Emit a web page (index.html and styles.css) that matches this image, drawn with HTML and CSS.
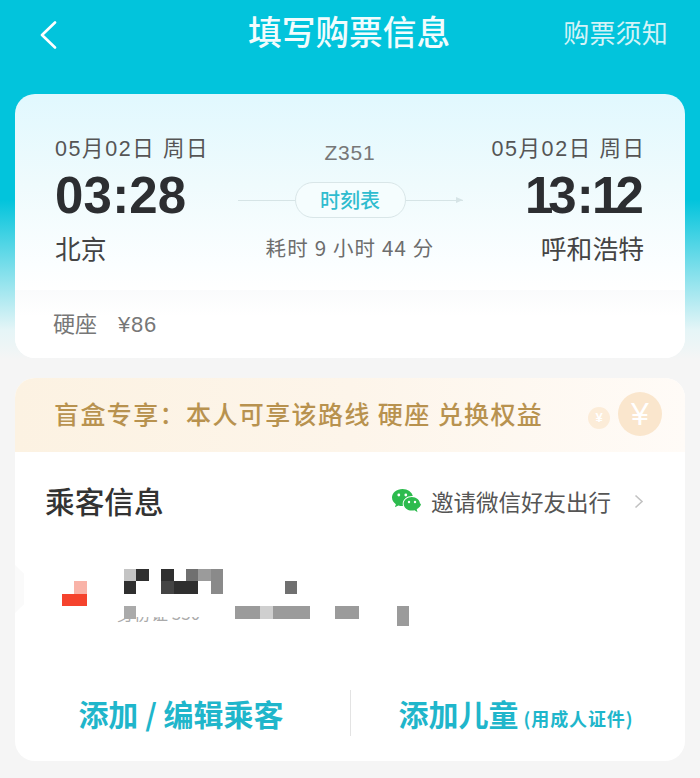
FILE: index.html
```html
<!DOCTYPE html>
<html lang="zh">
<head>
<meta charset="utf-8">
<title>填写购票信息</title>
<link rel="stylesheet" href="styles.css">
</head>
<body>
<div class="page">
  <header class="nav">
    <svg class="back" viewBox="0 0 18 28" width="18" height="28"><path d="M16 1.500 3 14l13 12.500" fill="none" stroke="#fff" stroke-width="2.600" stroke-linecap="round" stroke-linejoin="round"/></svg>
    <h1 class="nav-title">填写购票信息</h1>
    <span class="nav-link">购票须知</span>
  </header>

  <section class="card ticket">
    <div class="route">
      <div class="stop">
        <div class="date">05月02日 周日</div>
        <div class="time">03:28</div>
        <div class="city">北京</div>
      </div>
      <div class="middle">
        <div class="train">Z351</div>
        <div class="schedule">
          <span class="line"></span>
          <span class="pill">时刻表</span>
          <span class="line line-arrow"></span>
        </div>
        <div class="duration">耗时 9 小时 44 分</div>
      </div>
      <div class="stop stop-end">
        <div class="date date-end">05月02日 周日</div>
        <div class="time"><span class="one">1</span>3:<span class="one">1</span>2</div>
        <div class="city">呼和浩特</div>
      </div>
    </div>
    <div class="seat">硬座<span class="price">¥86</span></div>
  </section>

  <section class="card passenger">
    <div class="banner">
      <span class="banner-text">盲盒专享：本人可享该路线 硬座 兑换权益</span>
      <span class="coin coin-small">¥</span>
      <span class="coin coin-big">¥</span>
    </div>
    <div class="pass-head">
      <h2 class="pass-title">乘客信息</h2>
      <div class="invite">
        <svg class="wechat" viewBox="0 0 30 27" width="30" height="27">
          <path d="M11.500 1C5.600 1 1 4.900 1 9.600c0 2.700 1.500 5 3.900 6.600l-1 3 3.500-1.800c1.200.4 2.500.6 3.800.6h.8a8 8 0 0 1-.3-2c0-4.400 4.200-7.900 9.400-7.900h.7C21.100 4.200 16.700 1 11.500 1z" fill="#2dbb4e"/>
          <path d="M29 15.800c0-3.800-3.700-6.800-8.200-6.800s-8.200 3-8.200 6.800 3.700 6.800 8.200 6.800c1 0 1.900-.1 2.800-.4l2.900 2.100-.8-3c2.500-1.300 4.300-3.700 4.300-5.500z" fill="#2dbb4e"/>
          <circle cx="7.800" cy="7" r="1.400" fill="#fff"/><circle cx="14.800" cy="7" r="1.400" fill="#fff"/>
          <circle cx="18" cy="14" r="1.200" fill="#fff"/><circle cx="24" cy="14" r="1.200" fill="#fff"/>
        </svg>
        <span class="invite-text">邀请微信好友出行</span>
        <svg class="chev" viewBox="0 0 10 15" width="10" height="15"><path d="M1.500 1.500 8 7.500l-6.500 6" fill="none" stroke="#c2c2c2" stroke-width="1.600"/></svg>
      </div>
    </div>

    <div class="person">
      <span class="id-scrap">身份证 330 ·· ··· ··</span>
      <div class="mosaic">
        <i class="m2 c5"></i><i class="m9 c6"></i><i class="m9 c8"></i><i class="m6 c10"></i><i class="m4 c11"></i><i class="m5 c12"></i>
        <i class="r1 c1 row1"></i><i class="m9 c5 row1"></i><i class="m8 c8 row1"></i><i class="m9 c9 row1"></i><i class="m9 c10 row1"></i><i class="m5 c12 row1"></i><i class="m6 c18 row1"></i>
        <i class="r2 c0 row2"></i><i class="r2 c1 row2"></i>
        <i class="m3 c5 row3"></i><i class="m4 c14 row3"></i><i class="m4 c15 row3"></i><i class="m1 c16 row3"></i><i class="m4 c17 row3"></i><i class="m4 c18 row3"></i><i class="m4 c19 row3"></i><i class="m4 c22 row3"></i><i class="m4 c23 row3"></i><i class="m4 c27 row3 tall"></i>
      </div>
    </div>

    <div class="actions">
      <button class="action action-left">添加 / 编辑乘客</button>
      <button class="action action-right">添加儿童<small class="action-note">(用成人证件)</small></button>
    </div>
  </section>
</div>
</body>
</html>
```
FILE: styles.css
```css
* { box-sizing: border-box; }
html, body { margin: 0; padding: 0; }
body {
  font-family: "Noto Sans CJK SC", "Liberation Sans", sans-serif;
  background: #f5f5f5;
  color: #333;
}
.page {
  width: 700px;
  height: 778px;
  overflow: hidden;
  padding: 0 15px;
  background: linear-gradient(180deg, #02c4dc 0, #02c4dc 200px, #7fdfeb 270px, #e5f5f7 330px, #f5f5f5 360px, #f5f5f5 100%);
}
.nav {
  height: 94px;
  display: flex;
  align-items: flex-start;
  position: relative;
  padding: 20px 17px 0 24px;
  color: #fff;
}
.back { display: block; margin-top: 1px; }
.nav-title {
  margin: 0;
  position: absolute;
  left: 233px;
  top: 7px;
  font-size: 33.700px;
  line-height: 48px;
  font-weight: 500;
  color: #f2fcfd;
}
.nav-link {
  margin-left: auto;
  margin-top: -3px;
  font-size: 26px;
  line-height: 30px;
  color: #d3f3f7;
  letter-spacing: .2px;
}
.card {
  width: 670px;
  border-radius: 20px;
  background: #fff;
  overflow: hidden;
}
.ticket {
  height: 264px;
  display: flex;
  flex-direction: column;
  background: linear-gradient(180deg, #e1f8fe 0, #effbfd 90px, #fbfeff 170px, #fff 196px);
}
.route {
  height: 196px;
  display: flex;
  justify-content: space-between;
  padding: 40px 41px 0 40px;
}
.stop { width: 160px; display: flex; flex-direction: column; }
.stop-end { align-items: flex-end; }
.date {
  font-size: 21.500px;
  line-height: 30px;
  color: #555;
  letter-spacing: 1.600px;
  white-space: nowrap;
  font-family: "Liberation Sans", "Noto Sans CJK SC", sans-serif;
}
.date-end { margin-right: -1.600px; }
.time {
  font-family: "Liberation Sans", sans-serif;
  font-weight: 700;
  font-size: 51px;
  line-height: 58px;
  margin-top: 3px;
  letter-spacing: .2px;
  color: #2c2e31;
}
.one { letter-spacing: -5px; margin-left: -2px; }
.city {
  margin-top: 5px;
  font-size: 25.800px;
  line-height: 36px;
  color: #444;
}
.middle {
  flex: 1;
  display: flex;
  flex-direction: column;
  align-items: center;
  margin-left: 22px;
  margin-right: 21px;
}
.train {
  margin-top: 5px;
  font-family: "Liberation Sans", sans-serif;
  font-size: 21px;
  line-height: 28px;
  color: #777;
  letter-spacing: .8px;
}
.schedule {
  display: flex;
  align-items: center;
  margin-top: 15px;
  width: 225px;
}
.line { flex: 1; height: 1px; background: #d6e4e6; position: relative; }
.line-arrow::after {
  content: "";
  position: absolute;
  right: 0;
  top: -3px;
  border-left: 7px solid #d6e4e6;
  border-top: 3.500px solid transparent;
  border-bottom: 3.500px solid transparent;
}
.pill {
  width: 111px;
  height: 36px;
  border: 1.500px solid #d9e6e8;
  border-radius: 18px;
  background: #f5fdfe;
  font-size: 20px;
  line-height: 33px;
  font-weight: 500;
  text-align: center;
  color: #2fbccf;
}
.duration {
  margin-top: 14px;
  font-size: 20.500px;
  line-height: 30px;
  color: #6d6d6d;
  white-space: nowrap;
  letter-spacing: 1.150px;
}
.seat {
  flex: 1;
  padding: 17px 0 0 38px;
  font-size: 22px;
  line-height: 30px;
  color: #777;
  background: linear-gradient(180deg, #fafbfc 0, #fff 26px);
}
.price {
  margin-left: 21px;
  font-family: "Liberation Sans", sans-serif;
  letter-spacing: .8px;
}
.passenger {
  margin-top: 20px;
  height: 383px;
  position: relative;
}
.banner {
  height: 74px;
  display: flex;
  align-items: center;
  padding: 0 0 4px 39px;
  background: linear-gradient(90deg, #fcf2e2 0, #fdf5ea 50%, #fffbf7 100%);
  position: relative;
}
.banner-text {
  font-size: 25px;
  font-weight: 500;
  letter-spacing: 1.400px;
  color: #b8924f;
  white-space: nowrap;
}
.coin {
  position: absolute;
  border-radius: 50%;
  background: #fae6cd;
  color: #fff;
  text-align: center;
  font-family: "Liberation Sans", sans-serif;
  font-weight: 700;
}
.coin-small { left: 573px; top: 29px; width: 22px; height: 22px; line-height: 22px; font-size: 13px; background: #fcecd8; }
.coin-big { left: 603px; top: 14px; width: 44px; height: 44px; line-height: 44px; font-size: 32px; font-weight: 400; }
.pass-head {
  height: 100px;
  display: flex;
  align-items: center;
  padding: 0 41px 2px 30px;
  justify-content: space-between;
}
.pass-title {
  margin: 0;
  font-size: 29.700px;
  font-weight: 500;
  line-height: 42px;
  color: #333;
}
.invite { display: flex; align-items: center; }
.wechat { display: block; margin-right: 10px; }
.invite-text {
  font-size: 22.500px;
  line-height: 30px;
  color: #555;
}
.chev { display: block; margin-left: 23px; }
.person {
  height: 139px;
  position: relative;
  padding: 17px 0 0 47px;
}
.person::before {
  content: "";
  position: absolute;
  left: 0;
  top: 13px;
  width: 9px;
  height: 48px;
  background: #fafafa;
  clip-path: polygon(0 0, 100% 18%, 100% 82%, 0 100%);
}
.mosaic {
  position: relative;
  display: grid;
  grid-template-columns: repeat(28, 12.400px);
  grid-template-rows: repeat(4, 12.400px);
  filter: blur(.5px);
}
.mosaic i { display: block; grid-row: 1; }
.row1 { grid-row: 2 !important; }
.row2 { grid-row: 3 !important; }
.row3 { grid-row: 4 !important; }
.tall { height: 20px; }
.c0 { grid-column: 1; } .c1 { grid-column: 2; } .c5 { grid-column: 6; } .c6 { grid-column: 7; }
.c8 { grid-column: 9; } .c9 { grid-column: 10; } .c10 { grid-column: 11; } .c11 { grid-column: 12; }
.c12 { grid-column: 13; } .c14 { grid-column: 15; } .c15 { grid-column: 16; } .c16 { grid-column: 17; }
.c17 { grid-column: 18; } .c18 { grid-column: 19; } .c19 { grid-column: 20; } .c22 { grid-column: 23; }
.c23 { grid-column: 24; } .c27 { grid-column: 28; }
.m1 { background: #cfcfcf; }
.m2 { background: #c4c4c4; }
.m3 { background: #aaa; }
.m4 { background: #9b9b9b; }
.m5 { background: #8a8a8a; }
.m6 { background: #707070; }
.m8 { background: #444; }
.m9 { background: #2f2f2f; }
.r1 { background: #f9b3a8; }
.r2 { background: #f5432d; }
.id-scrap {
  position: absolute;
  left: 102px;
  top: 50px;
  font-size: 17px;
  line-height: 22px;
  color: #aaa;
  white-space: nowrap;
}
.id-scrap::after {
  content: "";
  position: absolute;
  left: -2px;
  right: -2px;
  top: 0;
  height: 15px;
  background: #fff;
}
.actions {
  height: 70px;
  display: flex;
  align-items: stretch;
}
.action {
  border: 0;
  padding: 0;
  background: none;
  font-family: inherit;
  font-weight: 700;
  font-size: 30px;
  line-height: 46px;
  color: #1fb6cb;
  height: 46px;
  margin-top: -1px;
  white-space: nowrap;
}
.action-left { width: 335px; padding-right: 3px; }
.action-right { width: 335px; border-left: 1px solid #e3e3e3; padding-right: 4px; }
.action-note { font-size: 18px; margin-left: 5px; letter-spacing: .9px; }
```
